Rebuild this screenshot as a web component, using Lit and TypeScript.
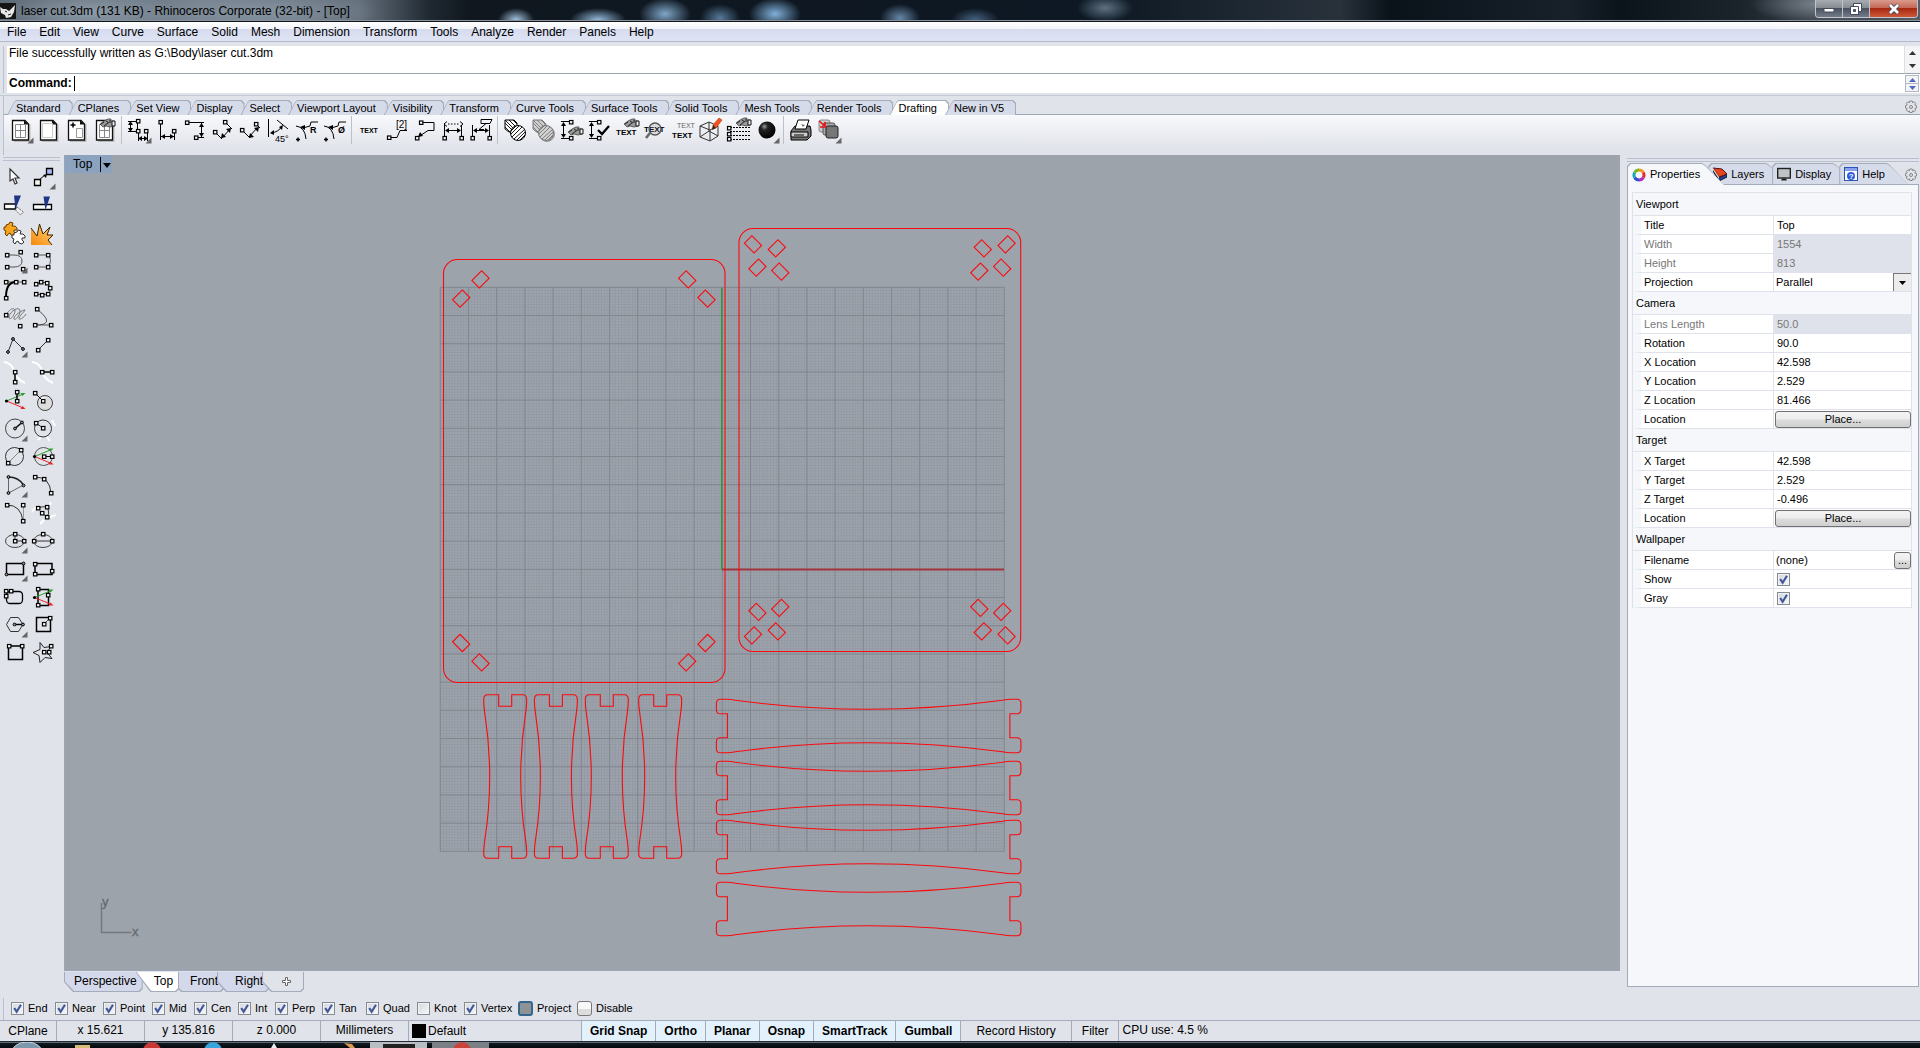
import { LitElement, html, svg, css } from "lit";
import { customElement, state } from "lit/decorators.js";
import { classMap } from "lit/directives/class-map.js";

/* ---------- icon helpers: every tool glyph lives on a 28 x 28 canvas ---------- */
const node = (x: number, y: number) =>
  svg`<rect x=${x - 1.5} y=${y - 1.5} width="3.4" height="3.4" fill="#fff" stroke="#000" stroke-width="1.2"/>`;
const nodes = (...p: number[][]) => p.map(([x, y]) => node(x, y));
const dot = (x: number, y: number) =>
  svg`<circle cx=${x} cy=${y} r="1.4" fill="#999" stroke="#000" stroke-width="1"/>`;
const thin = (d: string, c = "#555") => svg`<path d=${d} fill="none" stroke=${c} stroke-width="1"/>`;
const bold = (d: string, c = "#000") => svg`<path d=${d} fill="none" stroke=${c} stroke-width="1.5"/>`;
const more = svg`<path d="M27.5 21.5v6h-6z" fill="#666"/>`;
const label = (t: string, x: number, y: number, size = 8, fill = "#000") =>
  svg`<text x=${x} y=${y} font-size=${size} fill=${fill}>${t}</text>`;
const boldLabel = (t: string, x: number, y: number, size = 8, fill = "#000") =>
  svg`<text x=${x} y=${y} font-size=${size} font-weight="700" fill=${fill}>${t}</text>`;
const axes = (x: number, y: number) => svg`
  <path d="M${x} ${y}L${x + 17} ${y - 7}" stroke="#2ba02b"/><path d="M${x + 19} ${y - 8}l-5 0 2 3z" fill="#2ba02b"/>
  <path d="M${x} ${y}L${x + 17} ${y + 7}" stroke="#e22"/><path d="M${x + 19} ${y + 8}l-5 0 2-3z" fill="#e22"/>
  <circle cx=${x} cy=${y} r="1.6" fill="#000"/>`;
const page = svg`<path d="M23.5 8v17H8" stroke="#bbb" stroke-width="2" fill="none"/>
  <path d="M6.5 4.5h12.500l3.500 3.500v16h-16z" fill="#fff" stroke="#111" stroke-width="1.300"/><path d="M18 4v4.500h4.500z" fill="#111"/>`;
const paneGrid = thin("M9.500 8.500h10v13h-10zM14.500 8.500v13M9.500 14.500h10", "#888");
const hand = (x: number, y: number) => svg`<g transform="translate(${x} ${y})">
  <path d="M0 5l4-3 4-2h3v2h3v5l-4 1-4-1-3 1z" fill="#999" stroke="#444" stroke-width=".8"/>
  <path d="M1 5l3-2M4 7l4-3M6 2l3 2M10 1v3" stroke="#222" stroke-width="1"/><path d="M12 2h3v5h-3z" fill="#eee" stroke="#111"/></g>`;
const vdim = svg`${thin("M5 5.500h9M5 22.500h9M7.500 7v14", "#000")}<path d="M7.500 6l-2.500 4h5zM7.500 22l-2.500-4h5z" fill="#000"/>${nodes([15, 6], [15, 22])}`;
const hdim = svg`${thin("M6.500 9v12M23.500 9v12M8 14.500h14", "#000")}<path d="M7 14.500l4-2.500v5zM23 14.500l-4-2.500v5z" fill="#000"/>${nodes([6.5, 22], [23.5, 22])}`;
const hatch = (c: string, bg: string) => svg`
  <path d="M5 4h9l3 3v9H9l-4-3z" fill=${bg} stroke=${c}/><path d="M5 7l9 9M5 4l12 12M9 4l8 8M13 4l4 4M5 11l5 5" stroke=${c} stroke-width=".9"/>
  <circle cx="18" cy="17" r="7.500" fill=${bg} stroke=${c}/><path d="M11 18l8-8M12 21l10-10M14 23l10-9M17 24l8-8M20 24l5-5M11 15l5-5" stroke=${c} stroke-width=".9"/>`;
const puzzle = "M2 3l3-1 1-2 3 1-1 3 3 0 2 2 0 2-3 0 0 2 2 2-2 2-3-1-1-2-2 1-1 2-2-2 1-3-2-1 0-3 2 0z";

const drafting = [
  [
    svg`${page}${paneGrid}${more}`,
    svg`${page}${thin("M8.500 7.500h10v14h-10z", "#ccc")}`,
    svg`${page}${bold("M8.500 9h5M11 6.500v5")}${thin("M14.500 12.500h6v9h-6z", "#999")}`,
    svg`${page}${paneGrid}${hand(10, 3)}`,
  ],
  [
    svg`${thin("M4 5.500h9M4 15.500h9M6.500 6v9M13.500 6v9M14.500 17v8M23.500 17v8M15 22.500h8", "#000")}<path d="M6.500 5l-2.500 4h5zM6.500 16l-2.500-4h5zM14 22.500l4-2.500v5zM24 22.500l-4-2.500v5z" fill="#000"/>${nodes([14, 5], [14, 15], [22, 15])}${more}`,
    svg`${thin("M8.500 6v18M22.500 15v9M9 20.500h13", "#000")}<path d="M9 20.500l4-2.500v5zM22 20.500l-4-2.500v5z" fill="#000"/>${nodes([8.5, 6], [22, 15])}`,
    svg`${thin("M7 6.500h17M16 21.500h8M21.500 7v14", "#000")}<path d="M21.500 7l-2.500 4h5zM21.500 21l-2.500-4h5z" fill="#000"/>${nodes([7, 6.5], [16, 21.5])}`,
    svg`${thin("M17 6l7 7M7 16l7 7M14 22l8-9", "#000")}<path d="M13 22l1-5 4 4zM23 12l-1 5-4-4z" fill="#000"/>${nodes([17, 6], [7, 16])}`,
    svg`${thin("M20 8l4 4M6 14l8 8M13 21l8-9", "#000")}<path d="M13 22l1-5 4 4zM23 11l-1 5-4-4z" fill="#000"/>${nodes([20, 8], [6, 14])}`,
    svg`${thin("M4.500 3v18M13 4l11 9M7 17q8-1 11-7", "#000")}<path d="M6 17l4-3v5zM19 9l-1 5-3-3z" fill="#000"/>${label("45°", 11, 26, 9)}`,
    svg`${thin("M4 10q9 1 10 13M11 12l7-2 1-4h7", "#000")}<path d="M8 11l5-2v5z" fill="#000"/>${boldLabel("R", 18, 17, 9)}${bold("M4 23.500h4M6 21.500v4")}`,
    svg`${thin("M4 10q9 1 10 13M11 12l7-2 1-4h7", "#000")}<path d="M8 11l5-2v5z" fill="#000"/>${boldLabel("Ø", 18, 17, 9)}${bold("M4 23.500h4M6 21.500v4")}`,
  ],
  [
    svg`${boldLabel("TEXT", 6, 17, 7)}`,
    svg`${thin("M8 21.500h7l3-7h7", "#000")}${node(7, 21.5)}${label("[2]", 14, 12, 10)}`,
    svg`${thin("M11 6.500h13v8h-6l-9 6", "#000")}<path d="M8 21l2-5 3 4z" fill="#000"/>${nodes([11, 6.5], [7, 22])}`,
    svg`${hdim}<path d="M10 8h11" stroke="#000" stroke-dasharray="1.500 1.500"/>${thin("M9 5.500l-3 2.500 3 2.500M22 5.500l3 2.500-3 2.500", "#000")}`,
    svg`${hdim}${thin("M15 3.500h11l-2 4h-9zM20 7.500l-7 6h5", "#000")}`,
  ],
  [
    svg`${hatch("#000", "#fff")}`,
    svg`<g transform="translate(1 1)">${hatch("#999", "#bbb")}</g>${hatch("#777", "#d0d0d0")}`,
    svg`${vdim}${hand(12, 11)}`,
    svg`${vdim}<path d="M14 14l4 4 7-8" fill="none" stroke="#000" stroke-width="2.300"/>`,
    svg`${boldLabel("TEXT", 4, 19, 8)}${hand(12, 3)}`,
    svg`${boldLabel("TEXT", 4, 16, 8)}<circle cx="15" cy="13" r="6" fill="#8883" stroke="#555" stroke-width="1.300"/><path d="M10 17l-4 5" stroke="#666" stroke-width="2.500"/>`,
    svg`${label("TEXT", 9, 12, 7, "#666")}${boldLabel("TEXT", 4, 22, 8)}`,
    svg`<path d="M4 10l9-4 9 4v10l-8 5-10-4zM4 10l10 4 8-4M14 14v11M13 6v9l-9 6M13 15l9 5" fill="none" stroke="#333"/><path d="M17 9l6-7 3 2-6 8-3 1z" fill="#f4511e" stroke="#b83a10" stroke-width=".6"/><path d="M16 14l1-5 3 3z" fill="#321"/>`,
    svg`<path d="M6 11.500h20M6 15.500h20M6 19.500h20M6 23.500h20" stroke="#000" stroke-dasharray="2 1"/>${nodes([5, 12], [5, 18], [5, 23])}${hand(12, 2)}`,
    svg`<circle cx="15" cy="14" r="8.500" fill="url(#ball)"/>${more}`,
  ],
  [
    svg`<path d="M5 15l4-5h15l1 4v6l-4 4H5z" fill="#777" stroke="#000"/><path d="M9 13l3-9h11l-3 9z" fill="#fff" stroke="#000"/><path d="M5 16h17v5H5z" fill="#ccc" stroke="#000"/><path d="M8 19h10" stroke="#000"/><path d="M15 8l4 1-2 2z" fill="#777"/>`,
    svg`<rect x="5" y="4" width="11" height="12" rx="2" fill="#ccc" stroke="#888"/><rect x="9" y="7" width="12" height="12" rx="2" fill="#aaa" stroke="#555"/><rect x="12" y="10" width="12" height="12" rx="2" fill="#777" stroke="#222"/><path d="M5 5l6 5M11 6v5H6" stroke="#e11" stroke-width="1.600" fill="none"/>${more}`,
  ],
];
const draftingNames = [
  ["Layout", "New Detail", "Add Layout", "Detail Properties"],
  ["Linear Dimension", "Horizontal Dimension", "Vertical Dimension", "Aligned Dimension", "Rotated Dimension", "Angle Dimension", "Radial Dimension", "Diameter Dimension"],
  ["Text", "Leader", "Arrow Leader", "Edit Dimension Text", "Recenter Dimension Text"],
  ["Hatch", "Hatch Base", "Dimension Properties", "Make Dimension Current", "Text Properties", "Find Text", "Scale Text", "Make 2-D Drawing", "Linetypes", "Render"],
  ["Print", "Copy Layout"],
];

const palette: [string, unknown][] = [
  ["Select", svg`<path d="M10 7v12l3-2 2 5 2-1-2-5h4z" fill="#fff" stroke="#333" stroke-width="1.200"/>`],
  ["Point tools", svg`<path d="M11 18l6-5" stroke="#000"/><path d="M19 12l-1 4-3-3z" fill="#000"/><path d="M6.500 17.500h6v6h-6z" fill="#f4f4e8" stroke="#000" stroke-width="1.300"/><path d="M18.500 6.500h6v6h-6z" fill="#aab6f5" stroke="#000" stroke-width="1.300"/>${more}`],
  ["Trim", svg`<path d="M4.500 14h11v5h-11z" fill="#fff" stroke="#000" stroke-width="1.300"/><path d="M17 17l6.500 5-3 3-5-5z" fill="#eee" stroke="#666" stroke-dasharray="2 1"/><path d="M14 5.500h7L15.500 19z" fill="#1f3687"/>`],
  ["Split", svg`<path d="M5.500 14.500h18v5h-18z" fill="#fff" stroke="#000" stroke-width="1.300"/><path d="M15.500 6.500h6.500L17.500 20z" fill="#1f3687"/>`],
  ["Join", svg`<path d=${puzzle} transform="translate(4 4)" fill="#f7a520" stroke="#6b4300"/><path d=${puzzle} transform="translate(12 12)" fill="#fff" stroke="#333"/>`],
  ["Explode", svg`<path d="M3 27V10l6 8 2.500-12 3.500 10 7-7-3 8h6l-5 5 4 5z" fill="url(#blast)"/><path d="M3 10l6 8 2.500-12 3.500 10 7-7-3 8h6l-5 5 4 5" fill="none" stroke="#3a2500"/>`],
  ["Curve", svg`${thin("M7 9h7q8 0 8 6t-8 6H7")}${nodes([7, 9], [20.5, 6], [7, 21], [23, 23])}${more}`],
  ["Interpolate curve", svg`${thin("M20 21H8M8 9h12q5 5 0 12")}${nodes([8, 9], [20, 9], [8, 21], [20, 21])}`],
  ["Handle curve", svg`${thin("M16 8h8M6 8h8")}<path d="M6 23C6 13 9 8 16 8" fill="none" stroke="#000" stroke-width="2"/>${nodes([6, 8], [16, 8], [24, 8], [6, 24])}`],
  ["Curve through points", svg`${thin("M8 10q12-5 14 4t-14 6", "#333")}${nodes([8, 10], [13, 8], [19, 9], [22, 14], [20, 20], [14, 21], [8, 20])}`],
  ["Helix", svg`${thin("M6 13C10 6 15 5 15 9S9 20 9 15 20 3 20 9 13 20 14 16 25 7 25 8 20 13 19 16 24 16 26 12", "#777")}${nodes([6, 13], [20, 24])}`],
  ["Conic", svg`${thin("M9 7q15 12 7 15-4 1-9 1h16")}${nodes([9, 7], [7, 23], [23, 23])}`],
  ["Polyline", svg`${thin("M8 22l5-13 10 10", "#333")}${dot(13, 9)}${dot(8, 22)}${dot(23, 19)}${more}`],
  ["Line", svg`${thin("M20 10L10 20", "#333")}${nodes([20, 10], [10, 20])}`],
  ["Line normal", svg`<path d="M4 4q8 1 10 9t11 12" fill="none" stroke="#fff" stroke-width="2"/>${bold("M15 14v10")}${nodes([15, 14], [15, 24])}`],
  ["Line tangent", svg`<path d="M4 4q8 1 10 9t11 12" fill="none" stroke="#fff" stroke-width="2"/>${bold("M14 14h10")}${nodes([14, 14], [24, 14])}`],
  ["Line by plane", svg`${axes(6.5, 15)}${bold("M17 6v9")}${nodes([17, 6], [17, 15])}`],
  ["Tangent circle", svg`<circle cx="17" cy="17" r="7.500" fill="#ddd" stroke="#444"/><circle cx="15" cy="14" r="3" fill="#fff"/>${thin("M7 7l8 8", "#000")}${nodes([7, 7], [15, 15])}`],
  ["Circle", svg`<circle cx="15" cy="14.500" r="9.500" fill="none" stroke="#444"/>${bold("M15 14.500l7-6")}${dot(22, 8.5)}${dot(15, 14.5)}${more}`],
  ["Circle around curve", svg`<path d="M24 6l3 6M10 26l3-3M19 23l3 4" stroke="#fff" stroke-width="2"/><circle cx="15" cy="14.500" r="8.500" fill="none" stroke="#333"/>${thin("M8 9l7 5", "#333")}${nodes([8, 9], [15, 14])}`],
  ["Circle by diameter", svg`<circle cx="14.500" cy="14.500" r="9" fill="none" stroke="#333"/>${thin("M21 8L8 21", "#888")}${nodes([21, 8], [8, 21])}`],
  ["Vertical circle", svg`<circle cx="15.500" cy="14.500" r="9" fill="none" stroke="#555"/>${axes(6.5, 14.5)}${thin("M16 14.500h8", "#000")}${nodes([16, 14.5], [24, 14.5])}`],
  ["Arc", svg`${thin("M8.500 7v16l15-8", "#666")}${bold("M8.500 7q10 0 15 8", "#222")}${dot(8.5, 7)}${dot(8.5, 23)}${dot(23.5, 15.5)}${more}`],
  ["Arc by points", svg`${thin("M7 7q15 0 16 16", "#333")}${nodes([7, 7], [16, 9], [23, 23])}`],
  ["Arc by direction", svg`${thin("M7 7q14 0 16 16", "#333")}${thin("M23.500 7v16", "#999")}${nodes([7, 7], [23, 7], [23, 23])}`],
  ["Arc tangent", svg`<path d="M4 14l4-5M23 4l-2 5M22 19l6-2M12 26l4-4" stroke="#fff" stroke-width="2"/>${thin("M10 10q8-3 10 1t-1 8M14 15l5 4", "#333")}${nodes([10, 10], [19, 9], [14, 15], [19, 19])}`],
  ["Ellipse", svg`<ellipse cx="15" cy="15" rx="9.500" ry="6.500" fill="none" stroke="#444"/>${thin("M15 8v7h9", "#333")}${nodes([15, 8], [15, 15], [24, 15])}${more}`],
  ["Ellipse by diameter", svg`<ellipse cx="15" cy="15" rx="9.500" ry="6.500" fill="none" stroke="#444"/>${thin("M6 15h18", "#333")}${nodes([15, 8], [6, 15], [24, 15])}`],
  ["Rectangle", svg`${bold("M6.500 9.500h17v11h-17z")}${dot(23.5, 9.5)}${dot(6.5, 20.5)}${more}`],
  ["Rectangle 3 points", svg`${bold("M7 9.500h17v11H7z")}${nodes([7, 10], [7, 20], [24, 17])}`],
  ["Rounded rectangle", svg`<rect x="6.500" y="9.500" width="16" height="12" rx="3.500" fill="none" stroke="#000" stroke-width="1.300"/>${nodes([6, 9], [11, 9], [6, 14])}`],
  ["Vertical rectangle", svg`${bold("M10 7.500h10.500v16H10z")}${axes(6.5, 15.5)}${nodes([10, 7], [20, 13], [10, 23])}`],
  ["Polygon", svg`${thin("M10.500 7.500h8l4.500 7-4.500 7h-8l-4-7z", "#333")}${bold("M15 14.500h8")}${dot(14.5, 14.5)}${dot(23, 14.5)}${more}`],
  ["Square", svg`${bold("M8.500 7.500h14v14h-14z")}${thin("M16 14l6-6")}${nodes([16, 14], [22, 8])}`],
  ["Square by edge", svg`${bold("M8.500 8h14v13.500h-14z")}${nodes([9, 8], [22, 8])}`],
  ["Star", svg`${thin("M12 4.500l4 5 7-1-4 6 5 6-7-1-5 5-1-7-6-3 7-3z", "#222")}${nodes([23, 8], [16, 14], [21, 14])}`],
];

const gear = html`<svg class="gear" viewBox="0 0 14 14" aria-hidden="true">
  <g fill="none" stroke="#888" stroke-width="1"><path d="M5.800 1h2.400l.4 1.700 1.500-.9 1.600 1.600-.9 1.600 1.700.5v2.500l-1.700.5.9 1.600-1.600 1.600-1.500-.9-.4 1.700H5.800l-.4-1.700-1.500.9-1.600-1.600.9-1.600L1.500 8V5.500L3.200 5l-.9-1.600 1.600-1.600 1.500.9z"/><circle cx="7" cy="7" r="1.500"/></g></svg>`;

const tick = html`<svg viewBox="0 0 12 12" aria-hidden="true"><path d="M3 5.500l2.200 3.500L9.200 2.500" fill="none" stroke="#40579c" stroke-width="2"/></svg>`;

/* ---------- drawing geometry ---------- */
const slot = (x: number, y: number, up: boolean) =>
  svg`<rect x="-6.900" y="-5.300" width="13.800" height="10.600" transform="translate(${x} ${y}) rotate(${up ? -45 : 45})"/>`;
const strut = "M4 0H15V11.500H28V0H39Q43 0 43 5Q43 12 42 18Q32 82 42 146Q43 152 43 159Q43 163.500 39 163.500H28V152H15V163.500H4Q0 163.500 0 159Q0 152 1 146Q11 82 1 18Q0 12 0 5Q0 0 4 0Z";
const rail = "M4 0H10Q14 0 19 1Q152 19 286 1Q291 0 295 0H300.500Q304.500 0 304.500 4V10.500Q304.500 14.500 300.500 14.500H293.500V38.500H300.500Q304.500 38.500 304.500 42.500V49.500Q304.500 53.500 300.500 53.500H295Q291 53.500 286 52.500Q152 34.500 19 52.500Q14 53.500 10 53.500H4Q0 53.500 0 49.500V42.500Q0 38.500 4 38.500H11V14.500H4Q0 14.500 0 10.500V4Q0 0 4 0Z";

@customElement("app-root")
export class AppRoot extends LitElement {
  @state() private toolTab = "Drafting";
  @state() private viewTab = "Top";
  @state() private panelTab = "Properties";

  static styles = css`
    :host { display: flex; flex-direction: column; height: 100vh; overflow: hidden; background: #e0e3ea; color: #000; font: 11px/13px "Liberation Sans", Arial, sans-serif; }
    * { box-sizing: border-box; }
    button, input, select { font: inherit; color: inherit; margin: 0; padding: 0; border: 0; background: none; border-radius: 0; outline: 0; }
    svg { display: block; }
    .title { display: flex; height: 22px; flex: none; border-bottom: 1px solid #10151c; box-shadow: inset 0 -1px #8a919b; align-items: flex-start;
      background: radial-gradient(ellipse 90px 20px at 90px 12px, #8d9aa7, transparent), radial-gradient(ellipse 120px 20px at 260px 12px, #8693a0, transparent),
        radial-gradient(ellipse 18px 12px at 516px 20px, #a3c3de, transparent), radial-gradient(ellipse 28px 12px at 598px 20px, #93bada, transparent),
        radial-gradient(ellipse 26px 16px at 665px 14px, #7fa6c8, transparent), radial-gradient(ellipse 26px 16px at 775px 14px, #7fb0da, transparent),
        radial-gradient(ellipse 20px 14px at 720px 18px, #57799a, transparent),
        radial-gradient(ellipse 20px 14px at 900px 18px, #6787a8, transparent), radial-gradient(ellipse 24px 12px at 975px 20px, #45627f, transparent),
        radial-gradient(ellipse 28px 14px at 1105px 8px, #5e7080, transparent), radial-gradient(ellipse 70px 20px at 1820px 4px, #7a848d, transparent),
        linear-gradient(90deg, #5f6c78, #75828e 200px, #64707c 360px, #1f2831 430px, #10171f 470px, #0d1824 1100px, #29323b 1340px, #0a121a 1390px, #18212a 1570px, #0b131b 1620px, #1b232b 1740px, #555e67); }
    .logo { width: 16px; height: 16px; margin-top: 3px; flex: none; }
    .caption { flex: 1; margin: 0; padding: 4px 5px; font-size: 12px; line-height: 14px; font-weight: 400; }
    .wbtns { display: flex; height: 18px; border: 1px solid #c0c5cb; border-top: 0; border-radius: 0 0 4px 4px; margin-right: 2px; overflow: hidden; }
    .wbtn { width: 27px; background: linear-gradient(#a8acb2, #868c94 45%, #4a5260 50%, #747c89); border-right: 1px solid #c0c5cb; display: grid; place-items: center; }
    .wbtn.close { width: 47px; border: 0; background: linear-gradient(#d99a8c, #c46a58 45%, #a82812 50%, #cf5838); }
    .wbtn svg { width: 16px; height: 14px; }
    .menu { display: flex; flex: none; height: 20px; padding-left: 7px; gap: 13px; background: linear-gradient(#fff, #f1f3fa 7px, #d6dcee 7px, #dfe4f5); border-bottom: 1px solid #b4b9cc; }
    .menu a { color: #000; text-decoration: none; font-size: 12px; line-height: 20px; }
    .command { display: grid; flex: none; margin: 4px 0 2px 3px; padding-left: 4px; border-left: 1px solid #b9bfce; grid-template-columns: 1fr 16px; grid-template-rows: 28px 19px; background: #fff; box-shadow: inset 3px 0 #e0e3ea; font-size: 12px; line-height: 15px; }
    .history { border-bottom: 1px solid #9aa4b3; padding-left: 1px; margin: 0; }
    .prompt { display: flex; align-items: center; padding-left: 1px; gap: 2px; }
    .prompt label { font-weight: 700; }
    .prompt input { flex: 1; height: 15px; border-left: 1px solid #000; }
    .spin { display: flex; flex-direction: column; background: #f0f0f0; border-left: 1px solid #ddd; }
    .spin.hist { border-bottom: 1px solid #9aa4b3; }
    .spin.cmd { border: 1px solid #b4b8c4; margin: 1px; gap: 1px; background: #b4b8c4; }
    .spin button { flex: 1; display: grid; place-items: center; background: #f4f4f6; color: #333; }
    .spin.cmd button { color: #5068c0; }
    .spin svg { width: 7px; height: 4px; fill: currentColor; }
    .bars { flex: none; border-top: 1px solid #c4cad4; padding-left: 3px; }
    .barbox { border-left: 1px solid #b9bfce; }
    .tabrow { display: flex; height: 19px; padding: 4px 2px 0 3px; border-bottom: 1px solid #9aa6b5; position: relative; }
    .tab { display: block; background: #a4abbb; height: 15px; padding: 1px 1px 0; margin-right: -4px; clip-path: polygon(0 100%, 7px 2px, 9px 0, calc(100% - 3px) 0, 100% 3px, 100% 100%); }
    .tab span { display: block; height: 14px; line-height: 15px; padding: 0 11px 0 8px; background: #d6dbea; clip-path: polygon(0 100%, 6px 2px, 8px 0, calc(100% - 3px) 0, 100% 3px, 100% 100%); white-space: nowrap; }
    .tab.on span { background: #fff; }
    .grow { flex: 1; }
    .gear { width: 14px; height: 14px; flex: none; }
    .tools { display: flex; height: 40px; padding: 1px 0 0 2px; background: linear-gradient(#f8f9fb, #e0e3ea 34px); }
    .sep { width: 6px; height: 28px; padding-left: 3px; }
    .sep::before { content: ""; display: block; width: 1px; height: 28px; background: #bcc0c8; }
    .tool { width: 28px; height: 28px; flex: none; }
    .tool svg { width: 28px; height: 28px; font-family: "Liberation Sans", sans-serif; }
    .main { display: flex; flex: 1; min-height: 0; }
    .side { width: 64px; flex: none; padding: 2px 4px 0 0; }
    .grip { height: 4px; margin-left: 3px; border: solid #b9bfce; border-width: 1px 0; }
    .grid2 { display: grid; grid-template-columns: 28px 28px; padding-top: 1px; }
    .centre { flex: 1; min-width: 0; display: flex; flex-direction: column; }
    .viewport { flex: 1; min-height: 0; background: #9da3ab; border: solid #9ca4b8; border-width: 0 0 1px 1px; display: grid; overflow: hidden; }
    .viewport > * { grid-area: 1 / 1; }
    .canvas { width: 100%; height: 100%; min-height: 0; font: 13px "Liberation Sans", sans-serif; }
    .vlabel { justify-self: start; align-self: start; display: flex; height: 18px; align-items: center; background: #8ba3be; padding-left: 8px; gap: 8px; font-size: 12px; }
    .vlabel i { display: block; width: 12px; height: 15px; border-left: 1px solid #000; padding: 6px 0 0 2px; }
    .vlabel svg { width: 8px; height: 5px; }
    .vtabs { display: flex; flex: none; height: 27px; padding-top: 1px; }
    .vtab { display: block; height: 20px; background: #a4abbb; padding: 0 1px 1px; margin-right: -7px; font-size: 12px; clip-path: polygon(0 0, 100% 0, 100% calc(100% - 3px), calc(100% - 3px) 100%, 9px 100%, 7px calc(100% - 2px), 0 50%); }
    .vtab span { display: block; height: 19px; line-height: 19px; padding: 0 5px 0 17px; background: #d3d8ea; clip-path: polygon(0 0, 100% 0, 100% calc(100% - 3px), calc(100% - 3px) 100%, 9px 100%, 7px calc(100% - 2px), 0 50%); }
    .vtab:first-child span { padding-left: 9px; }
    .vtab.on { z-index: 1; position: relative; }
    .vtab.on, .vtab.on span { clip-path: polygon(0 0, 100% 0, 100% calc(100% - 3px), calc(100% - 3px) 100%, 15px 100%, 13px calc(100% - 2px)); }
    .vtab.on span { background: #fff; }
    .vtab.add span { background: #e0e3ea; padding: 5px 12px 0 19px; }
    .vtab.add svg { width: 9px; height: 9px; }
    .panel { width: 300px; flex: none; padding: 3px 1px 11px 7px; display: flex; flex-direction: column; }
    .panel .grip { margin-left: 0; }
    .ptabs { display: flex; height: 23px; padding-top: 1px; margin-bottom: -1px; align-items: stretch; position: relative; }
    .ptab { display: block; background: #a4abbb; padding: 1px 0 1px 1px; margin-right: -16px; clip-path: polygon(0 3px, 3px 0, calc(100% - 22px) 0, calc(100% - 19px) 2px, 100% 100%, 0 100%); }
    .ptab > span { display: flex; align-items: center; gap: 4px; height: 20px; padding: 0 24px 0 4px; background: #d6dbea; clip-path: polygon(0 3px, 3px 0, calc(100% - 22px) 0, calc(100% - 19px) 2px, 100% 100%, 0 100%); }
    .ptab.on { position: relative; z-index: 1; padding-bottom: 0; }
    .ptab.on > span { background: #f6f7fa; height: 21px; }
    .ptab svg { width: 14px; height: 14px; }
    .ptabs .gear { margin: 5px 1px 0 0; }
    .sheet { flex: 1; border: 1px solid #a4abbb; background: #f6f7fa; padding: 7px 6px 0 4px; }
    .props { width: 100%; border-spacing: 0; border: solid #dfe2ea; border-width: 1px 1px 0; table-layout: fixed; }
    .props th, .props td { height: 19px; padding: 0; border-bottom: 1px solid #dfe2ea; text-align: left; font-weight: 400; background: #fff; }
    .props th.head { height: 23px; padding-left: 3px; background: #f6f7fa; }
    .props th.key { padding-left: 3px; border-left: 8px solid #f6f7fa; }
    .props td { border-left: 1px solid #dfe2ea; padding-left: 3px; }
    .props td.full { padding: 0 0 0 1px; }
    .props .off { color: #777; }
    .props td.off { background: #dfe2ea; }
    .props input[type="text"] { display: block; width: 100%; height: 17px; }
    .push { display: block; width: 100%; height: 17px; border: 1px solid #707070; border-radius: 3px; background: linear-gradient(#f4f4f4, #ececec 48%, #dcdcdc 52%, #cfcfcf); text-align: center; }
    .file { display: flex; align-items: center; padding-left: 1px; }
    .file .push { width: 17px; flex: none; line-height: 12px; }
    .pick { display: grid; }
    .pick > * { grid-area: 1 / 1; }
    .pick select { appearance: none; width: 100%; height: 18px; padding-left: 1px; }
    .pick span { justify-self: end; width: 18px; height: 18px; border: solid #777; border-width: 1px 0 0 1px; background: #ececec; display: grid; place-items: center; pointer-events: none; }
    .pick svg { width: 7px; height: 4px; }
    .tickbox { display: grid; width: 13px; height: 13px; }
    .tickbox > * { grid-area: 1 / 1; }
    .tickbox input { appearance: none; width: 13px; height: 13px; border: 1px solid #858b93; background: linear-gradient(135deg, #d3d7dd, #f8f8f8); box-shadow: inset 0 0 0 1px #f2f2f2; }
    .tickbox svg { width: 13px; height: 13px; pointer-events: none; }
    .tickbox input:not(:checked) + svg { display: none; }
    .osnaps { display: grid; flex: none; height: 22px; align-items: center; margin: 0 0 0 3px; padding: 0 0 2px 7px; border-left: 1px solid #b9bfce;
      grid-template-columns: 44px 48px 49px 42px 44px 37px 47px 44px 51px 47px 54px 59px 1fr; }
    .osnap { display: flex; align-items: center; gap: 4px; }
    .osnap .square { appearance: none; width: 15px; height: 15px; border: 1px solid #777; border-radius: 3px; background: linear-gradient(#f8f8f8 50%, #ddd 52%); }
    .osnap .square:checked { background: #8f9394; border: 2px solid #34678f; }
    .status { display: flex; flex: none; height: 21px; border-top: 1px solid #a4abbb; font-size: 12px; }
    .status > * { border-right: 1px solid #a4abbb; text-align: center; line-height: 19px; white-space: nowrap; flex: none; }
    .status .c1 { width: 57px; } .status .c2 { width: 88px; } .status .c3 { width: 173px; display: flex; padding-left: 3px; gap: 2px; align-items: center; }
    .swatch { width: 14px; height: 14px; background: #000; }
    .status .hot { font-weight: 700; background: #e3f1fc; padding: 0 8px; }
    .status .plain { padding: 0 15px; } .status .filter { padding: 0 10px; } .status .cpu { border: 0; padding-left: 3px; }
    .taskbar { flex: none; height: 7px; border-top: 1px solid #222c36; background: linear-gradient(#5d6872 1px, #111a22 1px, #04090d); }
    .taskbar svg { width: 500px; height: 6px; }
  `;

  private menu() {
    return ["File", "Edit", "View", "Curve", "Surface", "Solid", "Mesh", "Dimension", "Transform", "Tools", "Analyze", "Render", "Panels", "Help"]
      .map((m) => html`<a href="#">${m}</a>`);
  }

  private toolTabs() {
    return ["Standard", "CPlanes", "Set View", "Display", "Select", "Viewport Layout", "Visibility", "Transform", "Curve Tools", "Surface Tools", "Solid Tools", "Mesh Tools", "Render Tools", "Drafting", "New in V5"]
      .map((t) => html`<button class=${classMap({ tab: true, on: t === this.toolTab })} @click=${() => (this.toolTab = t)}><span>${t}</span></button>`);
  }

  private drawing() {
    const lines: number[] = Array.from({ length: 21 }, (_, i) => i * 28.2);
    const left = [[480.5, 279.3, 1], [461.2, 298.7, 1], [687.2, 279.3, 0], [706.5, 298.7, 0], [480.5, 662.4, 0], [461.2, 643, 0], [687.2, 662.4, 1], [706.5, 643, 1]];
    const quad = [[753, 244.3, 0], [776.8, 248.3, 1], [757.4, 267.7, 1], [780.3, 271.7, 0]];
    const right = quad.flatMap(([x, y, u]) => [[x, y, u], [1759.6 - x, y, 1 - u], [x, 879.6 - y, 1 - u], [1759.6 - x, 879.6 - y, u]]);
    return html`<svg class="canvas" aria-label="Top view drawing">
      <defs><pattern id="fine" x="440.300" y="287.300" width="2.820" height="2.820" patternUnits="userSpaceOnUse"><path d="M0 .5H2.820M.5 0V2.820" stroke="#868c96" stroke-width=".5" stroke-opacity=".65"/></pattern></defs>
      <g transform="translate(-65 -155)">
        <rect x="440.300" y="287.300" width="564" height="564" fill="url(#fine)"/>
        <g stroke="#81868f" stroke-width="1">${lines.map((v) => svg`<path d="M${440.3 + v} 287.300v564M440.300 ${287.3 + v}h564" fill="none"/>`)}</g>
        <path d="M721.800 287.500v282" stroke="#3d9140" stroke-width="1.600"/>
        <path d="M722 569.500h282" stroke="#a3343c" stroke-width="1.800"/>
        <g fill="none" stroke="#fa0a0e" stroke-width="1.100">
          <rect x="443.500" y="259.500" width="281.500" height="423" rx="14"/>
          <rect x="739" y="228.500" width="281.700" height="423" rx="14"/>
          ${[...left, ...right].map(([x, y, u]) => slot(x, y, !!u))}
          ${[483.7, 534.4, 585.3, 638.7].map((x) => svg`<path d=${strut} transform="translate(${x} 694.700)"/>`)}
          ${[699.3, 761.3, 820.3, 882.3].map((y) => svg`<path d=${rail} transform="translate(716.400 ${y})"/>`)}
        </g>
        <path d="M101.500 903v29.500h30" fill="none" stroke="#74787e" stroke-width="1.500"/>
        <g fill="#64686d" stroke="#64686d" stroke-width=".3"><text x="102" y="906">y</text><text x="132" y="936">x</text></g>
      </g></svg>`;
  }

  private key(name: string, off = false) {
    return html`<th scope="row" class=${classMap({ key: true, off })}>${name}</th>`;
  }
  private field(name: string, value: string, off = false) {
    return html`<tr>${this.key(name, off)}<td class=${classMap({ off })}><input type="text" aria-label=${name} .value=${value} ?disabled=${off}></td></tr>`;
  }
  private head(name: string) {
    return html`<tr><th class="head" colspan="2" scope="colgroup">${name}</th></tr>`;
  }
  private place() {
    return html`<tr>${this.key("Location")}<td class="full"><button class="push">Place...</button></td></tr>`;
  }
  private check(name: string) {
    return html`<tr>${this.key(name)}<td><span class="tickbox"><input type="checkbox" aria-label=${name} checked>${tick}</span></td></tr>`;
  }

  private panelTabs() {
    const items: [string, unknown][] = [
      ["Properties", html`<svg viewBox="0 0 14 14"><g fill="none" stroke-width="3"><path d="M7 2a5 5 0 0 1 4.300 2.500" stroke="#f39a1e"/><path d="M11.300 4.500a5 5 0 0 1 0 5" stroke="#e02b3a"/><path d="M11.300 9.500A5 5 0 0 1 7 12" stroke="#b22bc4"/><path d="M7 12a5 5 0 0 1-4.300-2.500" stroke="#2b53d8"/><path d="M2.700 9.500a5 5 0 0 1 0-5" stroke="#17a8b8"/><path d="M2.700 4.500A5 5 0 0 1 7 2" stroke="#7bb92a"/></g></svg>`],
      ["Layers", html`<svg viewBox="0 0 14 14"><path d="M0 1l6 10 8-4v3l-8 4L0 4z" fill="#23479b" stroke="#112"/><path d="M0 1l9 1 5 5-8 3z" fill="#e8431f" stroke="#511"/><path d="M0 1l6 9v2L0 3z" fill="#f8d8c8"/></svg>`],
      ["Display", html`<svg viewBox="0 0 14 14"><rect x=".7" y="1.500" width="12.600" height="9.500" fill="#bfc3c6" stroke="#222" stroke-width="1.400"/><path d="M4 13.500h6l-1-2H5z" fill="#222"/></svg>`],
      ["Help", html`<svg viewBox="0 0 14 14"><rect x=".5" y=".5" width="13" height="13" fill="#fff" stroke="#2d52b8"/><path d="M1 1h12v3H1z" fill="#87a2e8"/><circle cx="7" cy="9" r="4" fill="#2d5be0"/><text x="4.800" y="12" font-size="8" font-weight="700" fill="#fff" font-family="Liberation Sans, sans-serif">?</text></svg>`],
    ];
    return items.map(([t, icon]) => html`<button class=${classMap({ ptab: true, on: t === this.panelTab })} @click=${() => (this.panelTab = t)}><span>${icon}${t}</span></button>`);
  }

  render() {
    const up = html`<svg viewBox="0 0 7 4"><path d="M3.500 0L7 4H0z"/></svg>`;
    const down = html`<svg viewBox="0 0 7 4"><path d="M0 0h7L3.500 4z"/></svg>`;
    const snaps = ["End", "Near", "Point", "Mid", "Cen", "Int", "Perp", "Tan", "Quad", "Knot", "Vertex"];
    return html`
      <svg width="0" height="0" style="position:absolute" aria-hidden="true"><defs>
        <radialGradient id="ball" cx=".35" cy=".3" r=".7"><stop offset="0" stop-color="#999"/><stop offset=".3" stop-color="#222"/><stop offset="1" stop-color="#000"/></radialGradient>
        <linearGradient id="blast" x1="0" y1="1" x2="1" y2="0"><stop offset="0" stop-color="#f58a0a"/><stop offset="1" stop-color="#ffd07a"/></linearGradient>
      </defs></svg>
      <header class="title">
        <svg class="logo" viewBox="0 0 16 16"><rect width="16" height="16" fill="#151515"/><path d="M0 4l3 2 3 0 3 2 6-6-1 7-3 5-5 1-1-3-4-2z" fill="#e8e8e8"/><path d="M5 8l2 1M8 12l3-1" stroke="#222"/></svg>
        <h1 class="caption">laser cut.3dm (131 KB) - Rhinoceros Corporate (32-bit) - [Top]</h1>
        <div class="wbtns">
          <button class="wbtn" aria-label="Minimize"><svg viewBox="0 0 16 14"><path d="M3 6.500h10v3.500H3z" fill="#fff" stroke="#444b5a"/></svg></button>
          <button class="wbtn" aria-label="Restore"><svg viewBox="0 0 16 14"><path d="M5.500 1.500h8v8h-8z" fill="#fff" stroke="#444b5a"/><path d="M2.500 4.500h8v8h-8z" fill="#fff" stroke="#444b5a"/><path d="M5.500 7.500h2v2h-2z" fill="#667" stroke="#444b5a"/></svg></button>
          <button class="wbtn close" aria-label="Close"><svg viewBox="0 0 16 14"><path d="M4 3l8 8M12 3l-8 8" stroke="#444b5a" stroke-width="4.500"/><path d="M4 3l8 8M12 3l-8 8" stroke="#fff" stroke-width="2.600"/></svg></button>
        </div>
      </header>
      <nav class="menu">${this.menu()}</nav>
      <section class="command">
        <p class="history">File successfully written as G:\\Body\\laser cut.3dm</p>
        <div class="spin hist"><button aria-label="Scroll up">${up}</button><button aria-label="Scroll down">${down}</button></div>
        <div class="prompt"><label for="cmd">Command:</label><input id="cmd" type="text"></div>
        <div class="spin cmd"><button aria-label="Previous">${up}</button><button aria-label="Next">${down}</button></div>
      </section>
      <section class="bars"><div class="barbox">
        <div class="tabrow">${this.toolTabs()}<span class="grow"></span>${gear}</div>
        <div class="tools">${drafting.map((group, g) => html`${g ? html`<span class="sep"></span>` : ""}${group.map((icon, i) => html`<button class="tool" aria-label=${draftingNames[g][i]}><svg viewBox="0 0 28 28">${icon}</svg></button>`)}`)}</div>
      </div></section>
      <div class="main">
        <aside class="side"><div class="grip"></div>
          <div class="grid2">${palette.map(([name, icon]) => html`<button class="tool" aria-label=${name}><svg viewBox="0 0 28 28">${icon}</svg></button>`)}</div>
        </aside>
        <main class="centre">
          <div class="viewport">${this.drawing()}
            <button class="vlabel">Top<i><svg viewBox="0 0 8 5"><path d="M0 0h8L4 5z"/></svg></i></button>
          </div>
          <div class="vtabs">${["Perspective", "Top", "Front", "Right"].map((t) => html`<button class=${classMap({ vtab: true, on: t === this.viewTab })} @click=${() => (this.viewTab = t)}><span>${t}</span></button>`)}
            <button class="vtab add" aria-label="Add viewport"><span><svg viewBox="0 0 9 9"><path d="M3.500.5h2v3h3v2h-3v3h-2v-3h-3v-2h3z" fill="#fff" stroke="#666"/></svg></span></button></div>
        </main>
        <aside class="panel">
          <div class="grip"></div>
          <div class="ptabs">${this.panelTabs()}<span class="grow"></span>${gear}</div>
          <div class="sheet"><table class="props"><colgroup><col width="140"><col></colgroup><tbody>
            ${this.head("Viewport")}
            ${this.field("Title", "Top")}${this.field("Width", "1554", true)}${this.field("Height", "813", true)}
            <tr>${this.key("Projection")}<td class="full"><span class="pick"><select aria-label="Projection"><option>Parallel</option><option>Perspective</option></select><span>${down}</span></span></td></tr>
            ${this.head("Camera")}
            ${this.field("Lens Length", "50.0", true)}${this.field("Rotation", "90.0")}${this.field("X Location", "42.598")}${this.field("Y Location", "2.529")}${this.field("Z Location", "81.466")}${this.place()}
            ${this.head("Target")}
            ${this.field("X Target", "42.598")}${this.field("Y Target", "2.529")}${this.field("Z Target", "-0.496")}${this.place()}
            ${this.head("Wallpaper")}
            <tr>${this.key("Filename")}<td class="full"><span class="file"><input type="text" aria-label="Filename" value="(none)"><button class="push" aria-label="Browse">...</button></span></td></tr>
            ${this.check("Show")}${this.check("Gray")}
          </tbody></table></div>
        </aside>
      </div>
      <section class="osnaps">
        ${snaps.map((s) => html`<label class="osnap"><span class="tickbox"><input type="checkbox" ?checked=${s !== "Knot"}>${tick}</span>${s}</label>`)}
        <label class="osnap"><input class="square" type="checkbox" checked>Project</label>
        <label class="osnap"><input class="square" type="checkbox">Disable</label>
      </section>
      <footer class="status">
        <button class="c1">CPlane</button><span class="c2">x 15.621</span><span class="c2">y 135.816</span><span class="c2">z 0.000</span><span class="c2">Millimeters</span>
        <button class="c3"><span class="swatch"></span>Default</button>
        ${["Grid Snap", "Ortho", "Planar", "Osnap", "SmartTrack", "Gumball"].map((t) => html`<button class="hot">${t}</button>`)}
        <button class="plain">Record History</button><button class="filter">Filter</button><span class="cpu">CPU use: 4.5 %</span>
      </footer>
      <div class="taskbar"><svg viewBox="0 0 500 6" aria-hidden="true">
        <ellipse cx="27" cy="12" rx="16" ry="12" fill="#7d98ab" stroke="#c8d6df"/><path d="M75 6V3h15v3z" fill="#d8bd74"/>
        <circle cx="152" cy="9" r="9" fill="#c93a34"/><circle cx="213" cy="9" r="9" fill="#38a6dd"/><path d="M271 6l3-5 3 5z" fill="#eee"/><path d="M344 1l8 1 3 4h-5z" fill="#d79a4f"/>
        <path d="M370 0h57v6h-57z" fill="#b9bec2"/><path d="M383 2h32v4h-32z" fill="#222"/><path d="M432 0h57v6h-57z" fill="#7a8085"/><circle cx="462" cy="9" r="9" fill="#c9453c"/>
      </svg></div>`;
  }
}
